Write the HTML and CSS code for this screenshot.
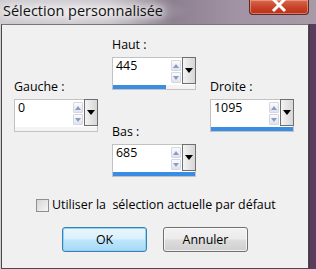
FILE: index.html
```html
<!DOCTYPE html>
<html lang="fr">
<head>
    <meta charset="UTF-8">
    <title>Sélection personnalisée</title>
    <link rel="stylesheet" href="styles.css">
</head>
<body>
    <div class="window">
        <div class="titlebar">
            <span class="title">Sélection personnalisée</span>
            <span class="close">
                <svg width="16" height="13" viewBox="0 0 16 13">
                    <path d="M2 -1 L14 11 M14 -1 L2 11" stroke="#fff" stroke-width="3" fill="none"/>
                </svg>
            </span>
        </div>

        <div class="client">
            <div class="fields">
                <!-- gauche -->
                <div class="col col-side">
                    <div class="spin">
                        <div class="spin-label">Gauche :</div>
                        <div class="spin-box">
                            <div class="spin-main">
                                <div class="spin-value">0</div>
                                <div class="spin-arrows">
                                    <span class="arrow up"></span>
                                    <span class="arrow down"></span>
                                </div>
                                <div class="spin-drop"><span class="tri"></span></div>
                            </div>
                            <div class="spin-bar"><div class="spin-fill" style="width: 0%"></div></div>
                        </div>
                    </div>
                </div>

                <!-- haut / bas -->
                <div class="col col-mid">
                    <div class="spin">
                        <div class="spin-label">Haut :</div>
                        <div class="spin-box">
                            <div class="spin-main">
                                <div class="spin-value">445</div>
                                <div class="spin-arrows">
                                    <span class="arrow up"></span>
                                    <span class="arrow down"></span>
                                </div>
                                <div class="spin-drop"><span class="tri"></span></div>
                            </div>
                            <div class="spin-bar"><div class="spin-fill" style="width: 65%"></div></div>
                        </div>
                    </div>
                    <div class="spin spin-bas">
                        <div class="spin-label">Bas :</div>
                        <div class="spin-box">
                            <div class="spin-main">
                                <div class="spin-value">685</div>
                                <div class="spin-arrows">
                                    <span class="arrow up"></span>
                                    <span class="arrow down"></span>
                                </div>
                                <div class="spin-drop"><span class="tri"></span></div>
                            </div>
                            <div class="spin-bar"><div class="spin-fill" style="width: 100%"></div></div>
                        </div>
                    </div>
                </div>

                <!-- droite -->
                <div class="col col-side">
                    <div class="spin">
                        <div class="spin-label">Droite :</div>
                        <div class="spin-box">
                            <div class="spin-main">
                                <div class="spin-value">1095</div>
                                <div class="spin-arrows">
                                    <span class="arrow up"></span>
                                    <span class="arrow down"></span>
                                </div>
                                <div class="spin-drop"><span class="tri"></span></div>
                            </div>
                            <div class="spin-bar"><div class="spin-fill" style="width: 100%"></div></div>
                        </div>
                    </div>
                </div>
            </div>

            <label class="check">
                <span class="check-box"></span>
                <span>Utiliser la&nbsp; sélection actuelle par défaut</span>
            </label>

            <div class="buttons">
                <button class="btn btn-default">OK</button>
                <button class="btn">Annuler</button>
            </div>
        </div>
    </div>
</body>
</html>
```

FILE: styles.css
```css
body {
    margin: 0;
    padding: 0;
    font-family: "Open Sans", "Noto Sans", sans-serif;
    font-size: 12.4px;
    color: #000;
    background: #4f3552;
}
.window {
    width: 316px;
    height: 269px;
    display: flex;
    flex-direction: column;
    background: linear-gradient(90deg, #d6cdd4 0, #d6cdd4 1px, #4f3552 1px, #4f3552 308px, #3e2841 309px, #5a3d5c 310px);
    overflow: hidden;
}
.titlebar {
    height: 24px;
    display: flex;
    justify-content: space-between;
    align-items: flex-start;
    flex-shrink: 0;
    background:
        radial-gradient(ellipse 110px 16px at 80px 11px, rgba(255, 255, 255, 0.55), rgba(255, 255, 255, 0) 100%),
        linear-gradient(90deg, #cfcbd0 0%, #c4bfc6 35%, #8d8090 55%, #a293a4 75%, #a899a9 100%);
}
.title {
    margin: 2px 0 0 3px;
    font-size: 14.5px;
    line-height: 18px;
    color: #111;
    text-shadow: 0 0 6px #fff, 0 0 8px #fff;
}
.close {
    width: 58px;
    height: 14px;
    margin-right: 7px;
    border: 1px solid #5c2a24;
    border-top: none;
    border-radius: 0 0 4px 4px;
    background: linear-gradient(#d8684f, #c53e25 60%, #b8321c);
    box-shadow: inset 0 0 0 1px rgba(255, 190, 170, 0.5);
    display: flex;
    justify-content: center;
    align-items: flex-start;
}
.client {
    flex: 1;
    margin: 0 7px 0 1px;
    border: 1px solid #4a4a4a;
    border-top-color: #777;
    background: #f0f0f0;
    display: flex;
    flex-direction: column;
}
.fields {
    display: flex;
    gap: 14px;
    padding-left: 12px;
}
.col-side {
    padding-top: 54px;
}
.col-mid {
    padding-top: 12px;
}
.spin-bas {
    margin-top: 34px;
}
.spin-label {
    line-height: 16px;
    margin-bottom: 4px;
}
.spin-box {
    width: 82px;
    height: 31px;
    border: 1px solid #c2c2c2;
    background: #fff;
    display: flex;
    flex-direction: column;
}
.spin-main {
    height: 26px;
    display: flex;
}
.spin-value {
    flex: 1;
    padding: 0 3px;
    line-height: 16px;
}
.spin-arrows {
    width: 10px;
    padding: 2px 1px 1px 0;
    display: flex;
    flex-direction: column;
    gap: 1px;
}
.arrow {
    flex: 1;
    border: 1px solid #d3d8e2;
    border-radius: 1px;
    background: linear-gradient(#fafbfd, #dfe4ec);
    position: relative;
}
.arrow::after {
    content: "";
    position: absolute;
    left: 1px;
    border-left: 3px solid transparent;
    border-right: 3px solid transparent;
}
.arrow.up::after {
    top: 3px;
    border-bottom: 4px solid #8c9cc0;
}
.arrow.down::after {
    top: 3px;
    border-top: 4px solid #8c9cc0;
}
.spin-drop {
    width: 12px;
    margin: -1px -1px 0 0;
    border: 1px solid #6f6f6f;
    background: linear-gradient(90deg, #f4f4f4, #d6d6d6);
    display: flex;
    justify-content: center;
    align-items: center;
}
.tri {
    border-left: 4px solid transparent;
    border-right: 4px solid transparent;
    border-top: 5px solid #000;
}
.spin-bar {
    flex: 1;
    margin-top: 1px;
    background: #f4f4f4;
}
.spin-fill {
    height: 100%;
    background: #3a8de2;
}
.check {
    display: flex;
    align-items: center;
    gap: 3px;
    margin: 20px 0 0 34px;
    line-height: 16px;
}
.check-box {
    width: 11px;
    height: 11px;
    border: 1px solid #8e8f8f;
    background: linear-gradient(135deg, #d6d6d6, #f6f6f6);
}
.buttons {
    display: flex;
    gap: 16px;
    margin: 14px 0 0 60px;
}
.btn {
    width: 85px;
    height: 25px;
    padding: 0;
    font-family: inherit;
    font-size: 12.4px;
    color: #000;
    border: 1px solid #707070;
    border-radius: 3px;
    background: linear-gradient(#f2f2f2, #ebebeb 48%, #dddddd 52%, #cfcfcf);
    box-shadow: inset 0 0 0 1px rgba(255, 255, 255, 0.7);
}
.btn-default {
    border-color: #3c7fb1;
    background: linear-gradient(#eaf6fd, #d9f0fc 48%, #bee6fd 52%, #a7d9f5);
    box-shadow: inset 0 0 0 1px #8fd2f5;
}
```
